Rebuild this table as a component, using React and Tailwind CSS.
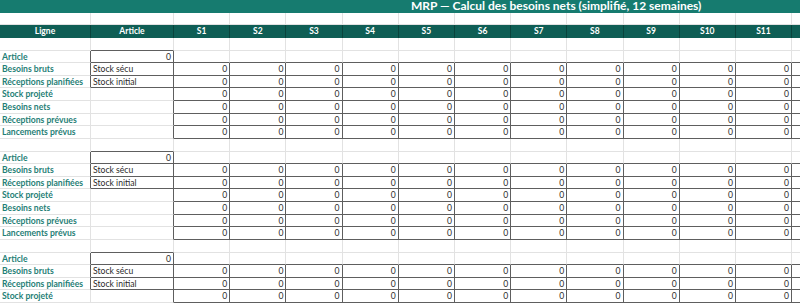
const weeks = ["S1", "S2", "S3", "S4", "S5", "S6", "S7", "S8", "S9", "S10", "S11", "S12"];
const labels = [
  "Article",
  "Besoins bruts",
  "Réceptions planifiées",
  "Stock projeté",
  "Besoins nets",
  "Réceptions prévues",
  "Lancements prévus",
];
const COLS = 14;

// lignes du corps (après titre, vide, entête, vide)
function buildRows() {
  const rows = [];
  rows.push({ kind: "blank" });
  for (let b = 0; b < 3; b++) {
    labels.forEach((label, i) => rows.push({ kind: "line", label, i }));
    rows.push({ kind: "blank" });
  }
  return rows.slice(0, 21);
}

function cellInfo(row, c) {
  if (!row || row.kind !== "line") return { boxed: false, text: "" };
  if (c === 0) return { boxed: false, text: row.label, label: true };
  if (c === 1) {
    if (row.i === 0) return { boxed: true, text: "0", num: true };
    if (row.i === 1) return { boxed: true, text: "Stock sécu" };
    if (row.i === 2) return { boxed: true, text: "Stock initial" };
    return { boxed: false, text: "" };
  }
  if (row.i === 0) return { boxed: false, text: "" };
  return { boxed: true, text: "0", num: true };
}

export default function App() {
  const rows = buildRows();

  return (
    <div className="w-[800px] h-[303px] overflow-hidden bg-white" style={{ fontFamily: "Lato, 'Liberation Sans', sans-serif" }}>
      <div className="h-[12.625px] bg-[#167b6f] text-white font-bold text-[12px] leading-[12.625px] pl-[411px] whitespace-nowrap">
        MRP — Calcul des besoins nets (simplifié, 12 semaines)
      </div>

      <div className="grid grid-cols-[91px_83px_repeat(12,56.2px)] w-[848px]">
        {Array.from({ length: COLS }).map((_, c) => (
          <div key={"g" + c} className="h-[12.625px] border-r border-b border-[#e2e2e2]" />
        ))}
        {["Ligne", "Article", ...weeks].map((h) => (
          <div
            key={h}
            className="h-[12.625px] bg-[#0f5e55] border-r border-[#0a433c] text-white font-bold text-[8.5px] leading-[13px] text-center"
          >
            {h}
          </div>
        ))}
        {rows.map((row, r) =>
          Array.from({ length: COLS }).map((_, c) => {
            const info = cellInfo(row, c);
            const right = info.boxed || (c + 1 < COLS && cellInfo(row, c + 1).boxed);
            const bottom = info.boxed || cellInfo(rows[r + 1], c).boxed;
            return (
              <div
                key={r + "-" + c}
                className={`h-[12.625px] border-r border-b whitespace-nowrap leading-[12px] text-[8.6px] ${
                  right ? "border-r-[#5e5e5e]" : "border-r-[#e2e2e2]"
                } ${bottom ? "border-b-[#5e5e5e]" : "border-b-[#e2e2e2]"} ${
                  info.label ? "font-bold pl-[1px]" : ""
                } ${info.num ? "text-right pr-[2px]" : "pl-[2px]"}`}
              >
                <span className={info.label ? "text-[#1f8076]" : "text-[#2b2b2b]"}>{info.text}</span>
              </div>
            );
          })
        )}
      </div>
    </div>
  );
}
